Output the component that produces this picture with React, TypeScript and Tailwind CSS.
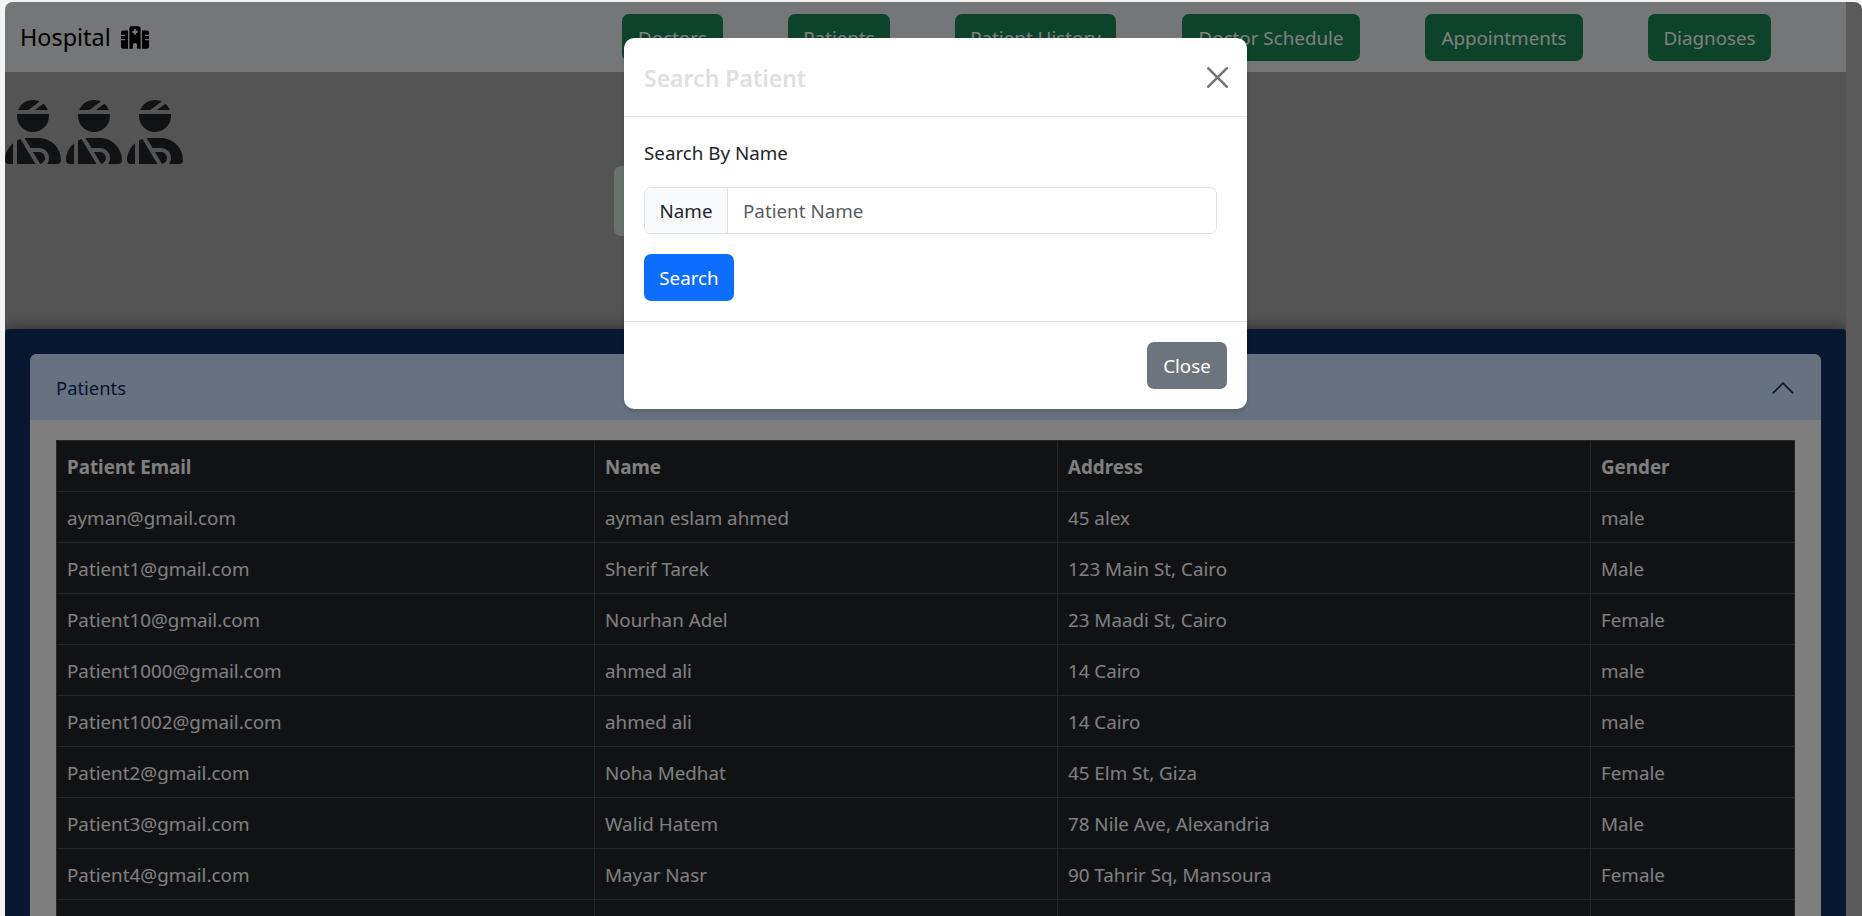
import { FaHospital, FaUserInjured } from 'react-icons/fa6'

const navLinks = [
  { label: 'Doctors', width: 'w-[101px]' },
  { label: 'Patients', width: 'w-[102px]' },
  { label: 'Patient History', width: 'w-[161px] mr-[1px]' },
  { label: 'Doctor Schedule', width: 'w-[178px]' },
  { label: 'Appointments', width: 'w-[158px]' },
  { label: 'Diagnoses', width: 'w-[123px]' },
]

const patients = [
  ['ayman@gmail.com', 'ayman eslam ahmed', '45 alex', 'male'],
  ['Patient1@gmail.com', 'Sherif Tarek', '123 Main St, Cairo', 'Male'],
  ['Patient10@gmail.com', 'Nourhan Adel', '23 Maadi St, Cairo', 'Female'],
  ['Patient1000@gmail.com', 'ahmed ali', '14 Cairo', 'male'],
  ['Patient1002@gmail.com', 'ahmed ali', '14 Cairo', 'male'],
  ['Patient2@gmail.com', 'Noha Medhat', '45 Elm St, Giza', 'Female'],
  ['Patient3@gmail.com', 'Walid Hatem', '78 Nile Ave, Alexandria', 'Male'],
  ['Patient4@gmail.com', 'Mayar Nasr', '90 Tahrir Sq, Mansoura', 'Female'],
  ['', '', '', ''],
]

function Navbar() {
  return (
    <nav className="flex h-[70px] shrink-0 items-center bg-[#eaecef]">
      <div className="flex w-[617px] items-center gap-[10px] pl-[15px] pt-[2px] text-[23.4px] text-black">
        Hospital
        <FaHospital className="h-[23px] w-[28px]" />
      </div>
      <div className="mt-[1px] flex gap-[65px]">
        {navLinks.map((link) => (
          <button
            key={link.label}
            className={`h-[47px] rounded-[7px] bg-[#198754] pt-[2px] text-center text-[18.8px] text-white ${link.width}`}
          >
            {link.label}
          </button>
        ))}
      </div>
    </nav>
  )
}

function PatientsTable() {
  return (
    <table className="w-[1738px] table-fixed border-collapse bg-[#212529] text-[18.8px] text-white">
      <colgroup>
        <col className="w-[538px]" />
        <col className="w-[463px]" />
        <col className="w-[533px]" />
        <col className="w-[204px]" />
      </colgroup>
      <thead>
        <tr className="h-[51px]">
          {['Patient Email', 'Name', 'Address', 'Gender'].map((h) => (
            <th key={h} className="border border-[#4a4e52] px-[10px] pt-[2px] text-left font-bold">
              {h}
            </th>
          ))}
        </tr>
      </thead>
      <tbody>
        {patients.map((row, i) => (
          <tr key={i} className="h-[51px]">
            {row.map((cell, j) => (
              <td key={j} className="border border-[#4a4e52] px-[10px] pt-[2px]">
                {cell}
              </td>
            ))}
          </tr>
        ))}
      </tbody>
    </table>
  )
}

function SearchModal() {
  return (
    <div className="absolute left-[619px] top-[36px] w-[623px] rounded-[10px] bg-white text-[#212529] shadow-md">
      <div className="flex h-[79px] items-center justify-between border-b border-[#dee2e6] px-[20px]">
        <h5 className="pt-[2px] text-[23px] font-semibold text-[#e0e0e0]">Search Patient</h5>
        <svg viewBox="0 0 16 16" className="mr-[-1px] h-[21px] w-[21px] fill-[#757575]">
          <path d="M.293.293a1 1 0 0 1 1.414 0L8 6.586 14.293.293a1 1 0 1 1 1.414 1.414L9.414 8l6.293 6.293a1 1 0 0 1-1.414 1.414L8 9.414l-6.293 6.293a1 1 0 0 1-1.414-1.414L6.586 8 .293 1.707a1 1 0 0 1 0-1.414z" />
        </svg>
      </div>
      <div className="border-b border-[#dee2e6] px-[20px] pb-[20px] pt-[21px] text-[18.8px]">
        <p className="leading-[30px]">Search By Name</p>
        <div className="mt-[19px] flex h-[47px] w-[573px] overflow-hidden rounded-[7px] border border-[#dee2e6]">
          <span className="flex w-[83px] items-center justify-center border-r border-[#dee2e6] bg-[#f8f9fa] pt-[2px]">
            Name
          </span>
          <input
            placeholder="Patient Name"
            className="min-w-0 flex-1 px-[15px] pt-[2px] outline-none placeholder:text-[#595c5f]"
          />
        </div>
        <button className="mt-[20px] h-[47px] w-[90px] rounded-[7px] bg-[#0d6efd] pt-[2px] text-white">Search</button>
      </div>
      <div className="flex justify-end px-[20px] py-[20px]">
        <button className="h-[47px] w-[80px] rounded-[7px] bg-[#6c757d] pt-[2px] text-[18.8px] text-white">Close</button>
      </div>
    </div>
  )
}

export default function App() {
  return (
    <div
      className="h-[916px] overflow-hidden bg-[#f3f3f3] pl-[5px] pt-[2px]"
      style={{ fontFamily: '"Noto Sans", "Open Sans", sans-serif' }}
    >
      <div className="relative flex h-[914px] overflow-hidden rounded-t-[8px] bg-[#a8a8a8]">
        <div className="flex w-[1841px] shrink-0 flex-col">
          <Navbar />

          {/* Patient icons and the alert that sits behind the modal */}
          <div className="h-[257px] shrink-0 pt-[28px]">
            <div className="flex gap-[5px] text-[#212529]">
              <FaUserInjured className="h-[64px] w-[56px]" />
              <FaUserInjured className="h-[64px] w-[56px]" />
              <FaUserInjured className="h-[64px] w-[56px]" />
            </div>
            <div className="ml-[609px] mt-[2px] h-[70px] w-[623px] rounded-[7px] bg-[#d1e7dd]" />
          </div>

          {/* Patients panel */}
          <div className="flex-1 rounded-t-[4px] bg-[#103060] px-[25px] pt-[25px] shadow-[0_0_16px_rgba(0,0,0,0.55)]">
            <div className="rounded-t-[7px] bg-white">
              <div className="flex h-[66px] items-center justify-between rounded-t-[7px] bg-[#cfe2ff] pl-[26px] pr-[25px] pt-[2px] text-[18.4px] text-[#052c65]">
                Patients
                <svg viewBox="0 0 16 16" className="h-[26px] w-[26px] rotate-180 fill-[#052c65]">
                  <path
                    fillRule="evenodd"
                    d="M1.646 4.646a.5.5 0 0 1 .708 0L8 10.293l5.646-5.647a.5.5 0 0 1 .708.708l-6 6a.5.5 0 0 1-.708 0l-6-6a.5.5 0 0 1 0-.708z"
                  />
                </svg>
              </div>
              <div className="px-[26px] pt-[20px]">
                <PatientsTable />
              </div>
            </div>
          </div>
        </div>

        {/* Window scrollbar gutter */}
        <div className="flex-1 bg-[#b4b4b4]" />

        <div className="absolute inset-0 bg-black/50" />
        <SearchModal />
      </div>
    </div>
  )
}
